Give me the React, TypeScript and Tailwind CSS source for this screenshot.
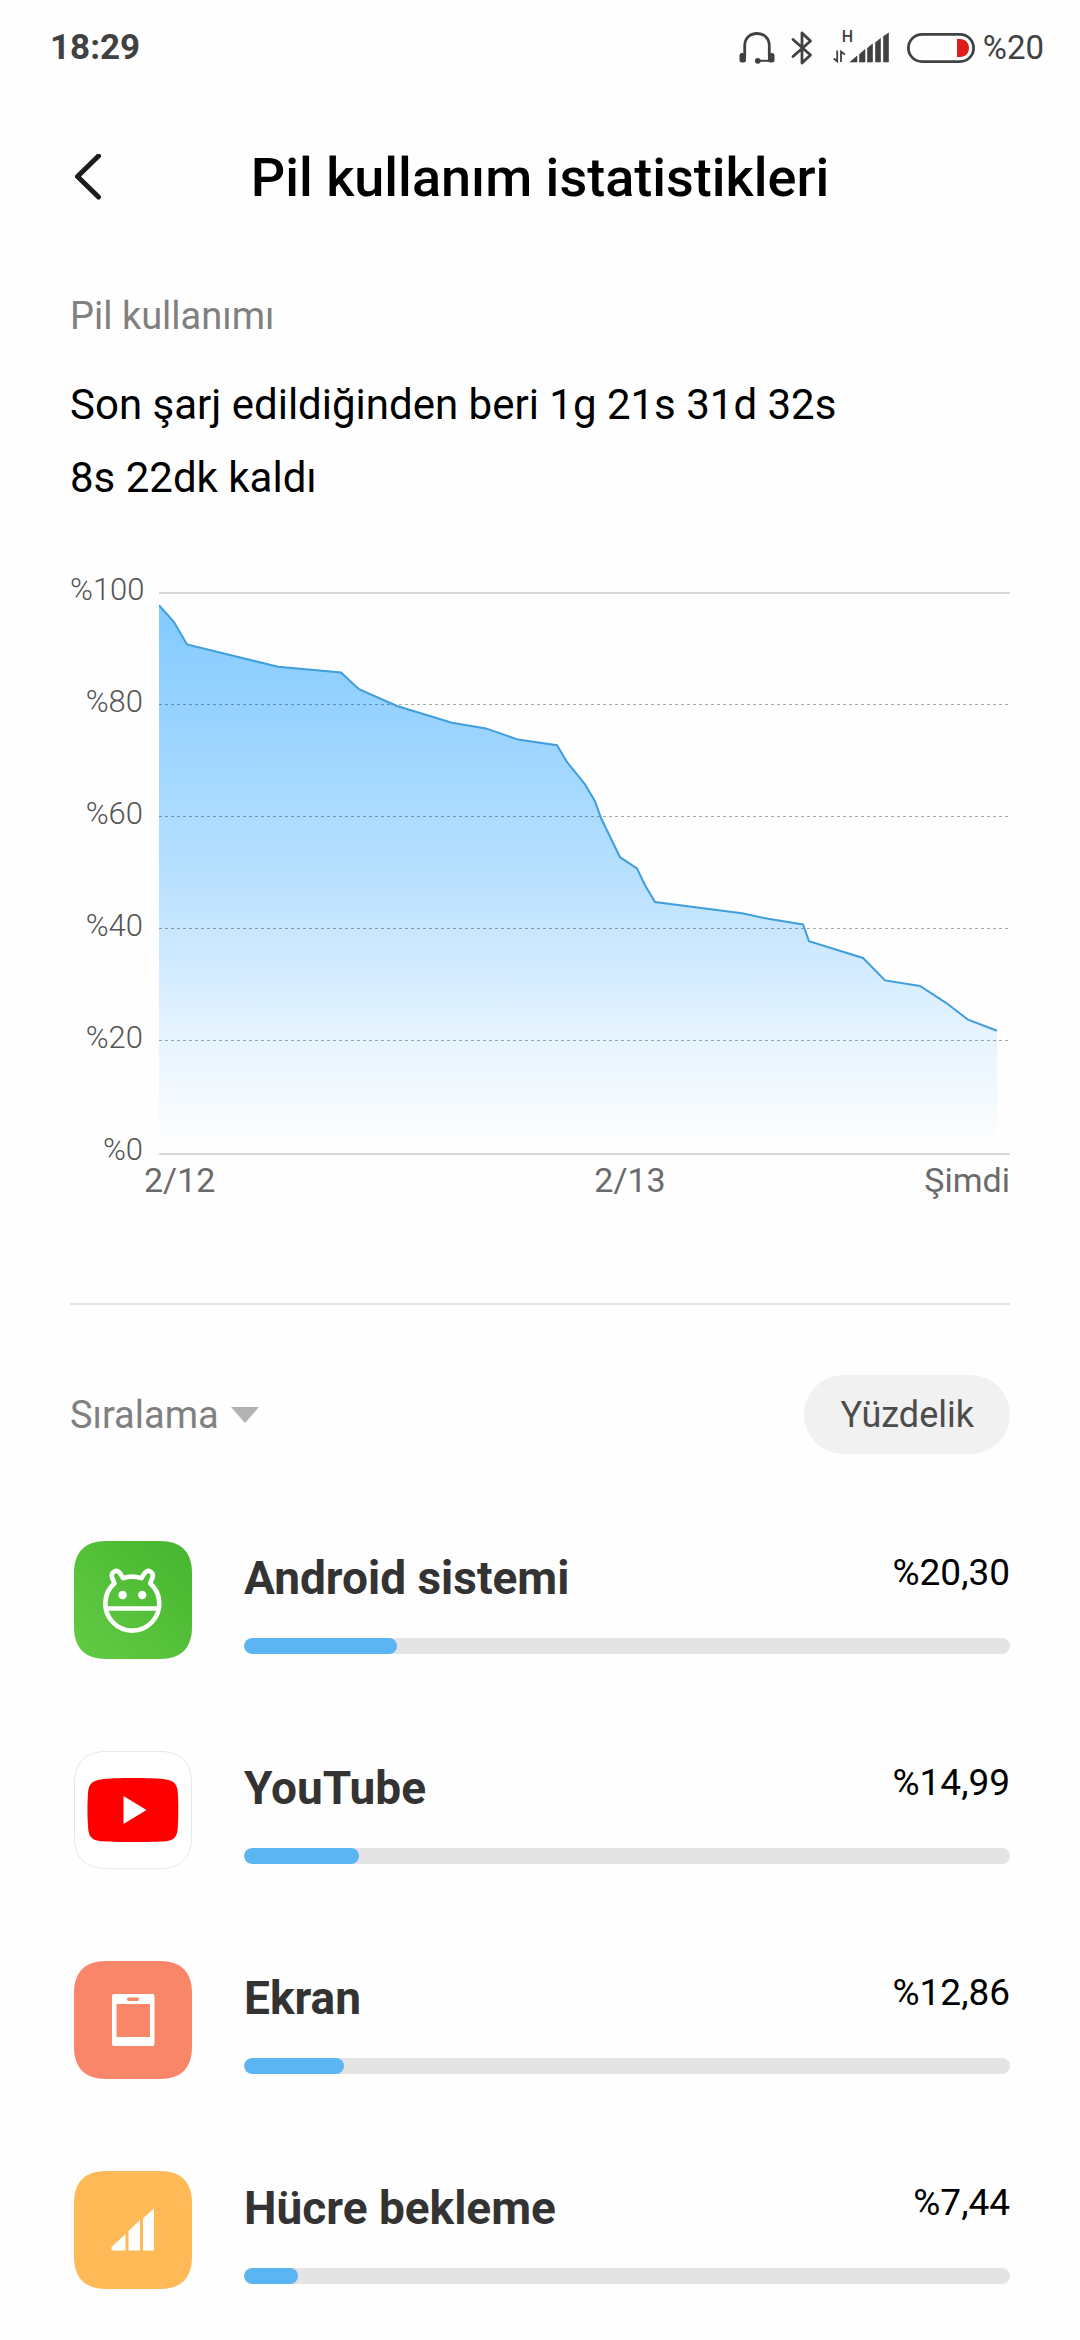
import type { ReactNode } from "react";

type UsageItem = {
  id: string;
  name: string;
  percent: number;
  label: string;
  icon: ReactNode;
};

type Sample = [x: number, level: number];

const CHART_W = 851;
const CHART_H = 563;
const STEP = 5.6;

// x offset inside the plot, battery level in percent
const SAMPLES: Sample[] = [
  [0, 98],
  [15, 95],
  [28, 91],
  [119, 87],
  [182, 86],
  [200, 83],
  [238, 80],
  [293, 77],
  [327, 76],
  [359, 74],
  [398, 73],
  [408, 70],
  [426, 66],
  [436, 63],
  [442, 60],
  [461, 53],
  [478, 51],
  [486, 48],
  [496, 45],
  [583, 43],
  [609, 42],
  [644, 41],
  [650, 38],
  [704, 35],
  [726, 31],
  [761, 30],
  [787, 27],
  [809, 24],
  [838, 22],
];

const Y_LABELS = ["%100", "%80", "%60", "%40", "%20", "%0"];

const SQUIRCLE =
  "M32 0H86C107 0 118 11 118 32V86C118 107 107 118 86 118H32C11 118 0 107 0 86V32C0 11 11 0 32 0Z";

function AndroidIcon() {
  return (
    <svg viewBox="0 0 118 118" className="size-[118px] shrink-0" aria-hidden="true">
      <defs>
        <linearGradient id="android-bg" x1="0" y1="1" x2="1" y2="0">
          <stop offset="0" stopColor="#62cb45" />
          <stop offset="1" stopColor="#47b52f" />
        </linearGradient>
      </defs>
      <path d={SQUIRCLE} fill="url(#android-bg)" />
      <g fill="none" stroke="#fff" strokeWidth="4.6" strokeLinejoin="round">
        <path d="M40.5 42.3L38.2 37C36 30.8 42.6 28 45.6 31.6L49.2 37.2A27 27 0 0 1 67.4 37.2L71 31.6C74 28 80.6 30.8 78.4 37L76.1 42.3A27 27 0 1 1 40.5 42.3Z" />
        <path d="M32 67.5H85" />
      </g>
      <circle cx="48.6" cy="54" r="4.2" fill="#fff" />
      <circle cx="68.2" cy="54" r="4.2" fill="#fff" />
    </svg>
  );
}

function YouTubeIcon() {
  return (
    <svg viewBox="0 0 118 118" className="size-[118px] shrink-0" aria-hidden="true">
      <path
        d={SQUIRCLE}
        transform="translate(.5 .5) scale(.9915)"
        fill="#fff"
        stroke="#e6e6e6"
        strokeWidth="1"
      />
      <path
        d="M59 27C72 27 85 27.4 92 28.4C99.5 29.5 103 33 103.7 40C104.5 51 104.5 66 103.7 78C103 86 99.5 89.5 92 90.2C80 91.3 38 91.3 27 90.2C18.5 89.5 15 86 14.2 78C13.2 66 13.2 51 14.2 40C15 33 18.5 29.5 27 28.4C34 27.4 46 27 59 27Z"
        fill="#f00"
      />
      <path d="M49.5 45L72.5 59L49.5 73Z" fill="#fff" />
    </svg>
  );
}

function ScreenIcon() {
  return (
    <svg viewBox="0 0 118 118" className="size-[118px] shrink-0" aria-hidden="true">
      <path d={SQUIRCLE} fill="#fa8669" />
      <path
        fill="#fff"
        fillRule="evenodd"
        d="M40 33H78.5Q80.5 33 80.5 35V83Q80.5 85 78.5 85H40Q38 85 38 83V35Q38 33 40 33ZM42.5 43V76H76V43ZM54.5 36.5Q53 36.5 53 38.2Q53 40 54.5 40H63.5Q65 40 65 38.2Q65 36.5 63.5 36.5Z"
      />
    </svg>
  );
}

function CellIcon() {
  return (
    <svg viewBox="0 0 118 118" className="size-[118px] shrink-0" aria-hidden="true">
      <path d={SQUIRCLE} fill="#ffb957" />
      <path
        fill="#fff"
        d="M37.5 76L51.5 63V79.5H37.5ZM54.5 60L66 49V79.5H54.5ZM69 47.5L80 37.5V79.5H69Z"
      />
    </svg>
  );
}

const ITEMS: UsageItem[] = [
  { id: "android", name: "Android sistemi", percent: 20.3, label: "%20,30", icon: <AndroidIcon /> },
  { id: "youtube", name: "YouTube", percent: 14.99, label: "%14,99", icon: <YouTubeIcon /> },
  { id: "screen", name: "Ekran", percent: 12.86, label: "%12,86", icon: <ScreenIcon /> },
  { id: "cell", name: "Hücre bekleme", percent: 7.44, label: "%7,44", icon: <CellIcon /> },
];

function StatusBar() {
  return (
    <div className="flex h-24 items-center justify-between pr-9 pl-[50px] leading-10 text-[#414141]">
      <span className="text-[35px] font-bold">18:29</span>
      <div className="flex items-center">
        <svg viewBox="0 0 36 34" className="mr-4 h-[34px] w-9" aria-hidden="true">
          <path
            d="M5.7 25V15C5.7 7 11 2.5 18 2.5S30.3 7 30.3 15V25"
            fill="none"
            stroke="#414141"
            strokeWidth="2.8"
          />
          <rect x="0.5" y="22" width="6.5" height="9.5" rx="2.5" fill="#414141" />
          <rect x="29" y="22" width="6.5" height="9.5" rx="2.5" fill="#414141" />
          <circle cx="18.8" cy="29.8" r="2.9" fill="#414141" />
          <path d="M19 29.8H31" stroke="#414141" strokeWidth="2" />
        </svg>
        <svg viewBox="0 0 22 34" className="mr-5 h-[34px] w-[22px]" aria-hidden="true">
          <path
            d="M2 8.5L19.5 24L11 32V2L19.5 10L2 25.5"
            fill="none"
            stroke="#414141"
            strokeWidth="2.8"
            strokeLinejoin="round"
            strokeLinecap="round"
          />
        </svg>
        <div className="relative mr-4 h-[34px] w-[58px]">
          <span className="absolute -top-1 left-[9px] text-base leading-5 font-medium">H</span>
          <svg viewBox="0 0 58 34" className="h-[34px] w-[58px]" aria-hidden="true">
            <path
              d="M17 31L24 25V31ZM26.5 23.2L32 18.5V31H26.5ZM34.5 17L39.5 13V31H34.5ZM42.5 11.5L47.5 7.5V31H42.5ZM50.5 5.5L55.5 2V31H50.5Z"
              fill="#414141"
              stroke="#414141"
              strokeWidth="0.6"
            />
            <path
              d="M4.2 19.5V30.3L0.8 27.5M8 31V20.5L11.8 23.5"
              fill="none"
              stroke="#414141"
              strokeWidth="1.8"
            />
          </svg>
        </div>
        <svg viewBox="0 0 68 30" className="mr-2 h-[30px] w-[68px]" aria-hidden="true">
          <rect
            x="1.4"
            y="1.4"
            width="65.2"
            height="27.2"
            rx="13.6"
            fill="none"
            stroke="#414141"
            strokeWidth="2.8"
          />
          <path d="M50 6H53C58.5 6 62 10 62 15S58.5 24 53 24H50Z" fill="#e01b1b" />
        </svg>
        <span className="text-[33px]">%20</span>
      </div>
    </div>
  );
}

function BatteryChart() {
  const points = SAMPLES.map(([x, level]) => `${x},${2 + (100 - level) * STEP}`);
  const lastX = SAMPLES[SAMPLES.length - 1][0];

  return (
    <div className="mt-14">
      <div className="flex">
        <div className="flex w-[89px] flex-col gap-[72px] pr-4 text-right text-[31px] leading-10 font-light text-[#555]">
          {Y_LABELS.map((label) => (
            <span key={label}>{label}</span>
          ))}
        </div>
        <svg
          viewBox={`0 0 ${CHART_W} ${CHART_H}`}
          preserveAspectRatio="none"
          className="mt-[22px] h-[563px] min-w-0 flex-1"
          role="img"
          aria-label="Pil kullanımı"
        >
          <defs>
            <linearGradient id="level-fill" gradientUnits="userSpaceOnUse" x1="0" y1="12" x2="0" y2="555">
              <stop offset="0" stopColor="#82caff" />
              <stop offset="0.5" stopColor="#b8e0ff" />
              <stop offset="0.8" stopColor="#e6f4ff" />
              <stop offset="1" stopColor="#fefefe" />
            </linearGradient>
          </defs>
          <polygon
            points={`0,${CHART_H - 2} ${points.join(" ")} ${lastX},${CHART_H - 2}`}
            fill="url(#level-fill)"
          />
          <path d={`M0 1H${CHART_W}M0 562H${CHART_W}`} stroke="#d8d8d8" strokeWidth="2" />
          <path
            d={`M0 112.5H${CHART_W}M0 224.5H${CHART_W}M0 336.5H${CHART_W}M0 448.5H${CHART_W}`}
            stroke="#000"
            strokeOpacity="0.33"
            strokeWidth="1"
            strokeDasharray="3 3"
          />
          <polyline points={points.join(" ")} fill="none" stroke="#3f9edb" strokeWidth="2" />
        </svg>
      </div>
      <div className="-mt-2.5 flex pl-[74px] text-[34px] leading-10 text-[#6a6a6a]">
        <span className="w-[52%]">2/12</span>
        <span>2/13</span>
        <span className="ml-auto">Şimdi</span>
      </div>
    </div>
  );
}

function UsageRow({ item }: { item: UsageItem }) {
  return (
    <li className="flex gap-[52px] pl-1">
      {item.icon}
      <div className="min-w-0 flex-1 pt-1">
        <div className="flex items-start justify-between leading-14">
          <h2 id={`name-${item.id}`} className="mt-[5px] text-[46px] font-bold text-[#333]">
            {item.name}
          </h2>
          <span className="text-[37px] text-black">{item.label}</span>
        </div>
        <div
          role="progressbar"
          aria-labelledby={`name-${item.id}`}
          aria-valuenow={item.percent}
          aria-valuemin={0}
          aria-valuemax={100}
          className="mt-8 h-4 overflow-hidden rounded-full bg-[#e4e4e4]"
        >
          <div
            className="h-full rounded-full bg-[#5bb5f3]"
            style={{ width: `${Math.round(item.percent)}%` }}
          />
        </div>
      </div>
    </li>
  );
}

export default function App() {
  return (
    <div className="min-h-screen bg-[#fefefe] font-['Roboto',sans-serif]">
      <StatusBar />
      <header className="relative flex h-41 items-center justify-center">
        <button type="button" aria-label="Geri" className="absolute left-[70px] p-1">
          <svg viewBox="0 0 30 48" className="h-12 w-[30px]" aria-hidden="true">
            <path
              d="M24.5 2L3.500 22.500L24.5 43"
              fill="none"
              stroke="#1c1c1c"
              strokeWidth="5"
              strokeLinecap="round"
              strokeLinejoin="round"
            />
          </svg>
        </button>
        <h1 className="text-[54px] leading-16 font-medium text-black">Pil kullanım istatistikleri</h1>
      </header>

      <main className="px-[70px] pb-12">
        <p className="pt-8 text-[38px] leading-12 text-[#808080]">Pil kullanımı</p>
        <div className="mt-7 text-[42px] leading-[73px] text-black">
          <p>Son şarj edildiğinden beri 1g 21s 31d 32s</p>
          <p>8s 22dk kaldı</p>
        </div>

        <BatteryChart />

        <hr className="mt-[103px] border-t-2 border-[#e5e5e5]" />

        <div className="mt-[70px] flex items-center justify-between">
          <label className="flex items-center gap-3 text-[#808080]">
            <select aria-label="Sıralama" className="appearance-none bg-transparent text-[38px] leading-12">
              <option>Sıralama</option>
            </select>
            <svg viewBox="0 0 28 16" className="h-4 w-7" aria-hidden="true">
              <path d="M0 0H28L14 16Z" fill="#b2b2b2" />
            </svg>
          </label>
          <button
            type="button"
            className="h-[79px] rounded-full bg-[#f1f1f1] px-9 text-[36px] leading-12 text-[#4c4c4c]"
          >
            Yüzdelik
          </button>
        </div>

        <ul className="mt-[87px] flex flex-col gap-[92px]">
          {ITEMS.map((item) => (
            <UsageRow key={item.id} item={item} />
          ))}
        </ul>
      </main>
    </div>
  );
}
